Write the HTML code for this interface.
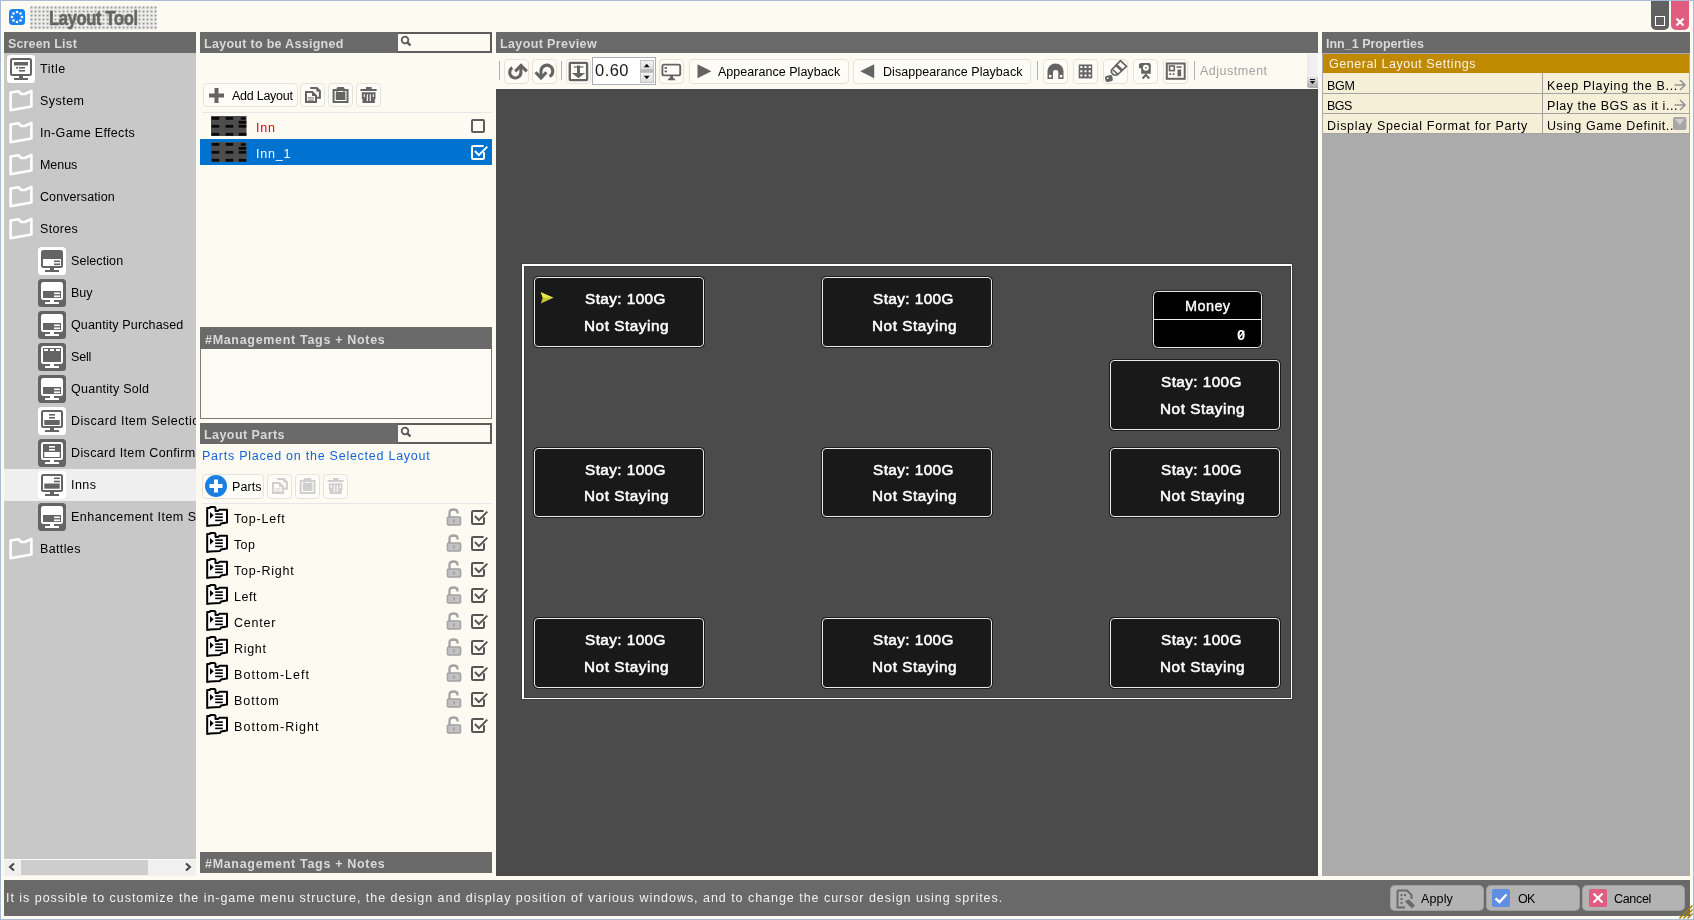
<!DOCTYPE html><html><head><meta charset="utf-8"><style>
html,body{margin:0;padding:0;}
body{width:1694px;height:920px;overflow:hidden;position:relative;background:#fcfaf1;font-family:"Liberation Sans",sans-serif;}
.t{position:absolute;white-space:nowrap;will-change:transform;}
.r{position:absolute;box-sizing:border-box;}
svg{position:absolute;overflow:visible;}
.btn{position:absolute;box-sizing:border-box;border:1px solid #e6e3da;border-radius:4px;background:#fdfcf7;}
</style></head><body>
<div class="r" style="left:0px;top:0px;width:1694px;height:920px;border:1px solid #a5bbd6;"></div>
<svg style="left:9px;top:9px;" width="16" height="16" viewBox="0 0 16 16"><rect x="0" y="0" width="16" height="16" rx="3.5" fill="#1683f0"/><circle cx="13.00" cy="8.00" r="1.3" fill="#fff"/><circle cx="11.54" cy="11.54" r="1.3" fill="#fff"/><circle cx="8.00" cy="13.00" r="1.3" fill="#fff"/><circle cx="4.46" cy="11.54" r="1.3" fill="#fff"/><circle cx="3.00" cy="8.00" r="1.3" fill="#fff"/><circle cx="4.46" cy="4.46" r="1.3" fill="#fff"/><circle cx="8.00" cy="3.00" r="1.3" fill="#fff"/><circle cx="11.54" cy="4.46" r="1.3" fill="#fff"/></svg>
<svg style="left:30px;top:6px;" width="127" height="24" viewBox="0 0 127 24"><defs><pattern id="dots" width="4" height="4" patternUnits="userSpaceOnUse"><rect width="4" height="4" fill="#efefed"/><rect x="0.5" y="0.5" width="2" height="2" fill="#9c9c9c"/></pattern></defs><rect width="127" height="24" fill="url(#dots)"/></svg>
<div class="t" style="left:49px;top:5.6px;font-size:21px;line-height:24px;font-weight:bold;color:#646464;transform:scaleX(0.785);transform-origin:0 0;letter-spacing:-0.4px;-webkit-text-stroke:0.6px #646464;">Layout Tool</div>
<div class="r" style="left:1651px;top:1px;width:18px;height:29px;background:#616161;border-radius:0 0 5px 5px;"></div>
<div class="r" style="left:1655px;top:16px;width:10px;height:10px;border:1.5px solid #fff;"></div>
<div class="r" style="left:1671px;top:1px;width:18px;height:29px;background:#e05d80;border-radius:0 0 5px 5px;"></div>
<svg style="left:1675px;top:17px;" width="10" height="10" viewBox="0 0 10 10"><path d="M1.5 1.5L8.5 8.5M8.5 1.5L1.5 8.5" stroke="#fff" stroke-width="2.2"/></svg>
<div class="r" style="left:4px;top:32px;width:192px;height:21px;background:#6a6a6a;"></div>
<div class="t" style="left:8px;top:38.42px;font-size:12.5px;line-height:12.5px;color:#d9d9d9;font-weight:bold;letter-spacing:0.146px;">Screen List</div>
<div class="r" style="left:200px;top:32px;width:292px;height:21px;background:#6a6a6a;"></div>
<div class="t" style="left:204px;top:38.42px;font-size:12.5px;line-height:12.5px;color:#d9d9d9;font-weight:bold;letter-spacing:0.291px;">Layout to be Assigned</div>
<div class="r" style="left:398px;top:32px;width:94px;height:21px;background:#fcfaf1;border:2px solid #5c5c5c;border-left:none;"></div>
<svg style="left:400px;top:35px;" width="12" height="12" viewBox="0 0 12 12"><circle cx="5" cy="5" r="3.3" stroke="#5a5a5a" stroke-width="1.8" fill="none"/><path d="M7.3 7.3L10.5 10.5" stroke="#5a5a5a" stroke-width="2.4"/></svg>
<div class="r" style="left:496px;top:32px;width:822px;height:21px;background:#6a6a6a;"></div>
<div class="t" style="left:500px;top:38.42px;font-size:12.5px;line-height:12.5px;color:#d9d9d9;font-weight:bold;letter-spacing:0.378px;">Layout Preview</div>
<div class="r" style="left:1322px;top:32px;width:368px;height:21px;background:#6a6a6a;"></div>
<div class="t" style="left:1326px;top:38.42px;font-size:12.5px;line-height:12.5px;color:#d9d9d9;font-weight:bold;letter-spacing:0.003px;">Inn_1 Properties</div>
<div class="r" style="left:4px;top:53px;width:192px;height:806px;background:#c8c8c8;"></div>
<div class="r" style="left:4px;top:469px;width:192px;height:32px;background:#efefef;"></div>
<div style="position:absolute;left:4px;top:53px;width:192px;height:806px;overflow:hidden;">
<svg style="left:3px;top:2px;" width="28" height="28" viewBox="0 0 28 28"><rect x="0" y="0" width="28" height="28" rx="3.5" fill="#ffffff"/><rect x="4" y="4" width="20" height="16" rx="1.5" fill="none" stroke="#646464" stroke-width="2"/><rect x="12" y="20" width="4" height="3" fill="#646464"/><rect x="7" y="23" width="14" height="2" fill="#646464"/><rect x="7" y="7" width="14" height="3.5" fill="#646464"/><rect x="9" y="12" width="2" height="1.6" fill="#646464"/><rect x="12" y="12" width="6" height="1.6" fill="#646464"/><rect x="12" y="15" width="6" height="1.6" fill="#646464"/></svg>
<div class="t" style="left:36.3px;top:10.22px;font-size:12.5px;line-height:12.5px;color:#000;font-weight:normal;letter-spacing:0.529px;">Title</div>
<svg style="left:-4px;top:32px;" width="32" height="32" viewBox="0 0 32 32"><path d="M10.6 25.3 L10.6 7.5 L18.5 6.2 L21 9 L25 9 L31.4 6 L31.4 21.5 Z" fill="none" stroke="#fff" stroke-width="2.6" stroke-linejoin="round"/></svg>
<div class="t" style="left:36.3px;top:42.22px;font-size:12.5px;line-height:12.5px;color:#000;font-weight:normal;letter-spacing:0.455px;">System</div>
<svg style="left:-4px;top:64px;" width="32" height="32" viewBox="0 0 32 32"><path d="M10.6 25.3 L10.6 7.5 L18.5 6.2 L21 9 L25 9 L31.4 6 L31.4 21.5 Z" fill="none" stroke="#fff" stroke-width="2.6" stroke-linejoin="round"/></svg>
<div class="t" style="left:36.3px;top:74.22px;font-size:12.5px;line-height:12.5px;color:#000;font-weight:normal;letter-spacing:0.329px;">In-Game Effects</div>
<svg style="left:-4px;top:96px;" width="32" height="32" viewBox="0 0 32 32"><path d="M10.6 25.3 L10.6 7.5 L18.5 6.2 L21 9 L25 9 L31.4 6 L31.4 21.5 Z" fill="none" stroke="#fff" stroke-width="2.6" stroke-linejoin="round"/></svg>
<div class="t" style="left:36.3px;top:106.22px;font-size:12.5px;line-height:12.5px;color:#000;font-weight:normal;letter-spacing:-0.063px;">Menus</div>
<svg style="left:-4px;top:128px;" width="32" height="32" viewBox="0 0 32 32"><path d="M10.6 25.3 L10.6 7.5 L18.5 6.2 L21 9 L25 9 L31.4 6 L31.4 21.5 Z" fill="none" stroke="#fff" stroke-width="2.6" stroke-linejoin="round"/></svg>
<div class="t" style="left:36.3px;top:138.22px;font-size:12.5px;line-height:12.5px;color:#000;font-weight:normal;letter-spacing:0.095px;">Conversation</div>
<svg style="left:-4px;top:160px;" width="32" height="32" viewBox="0 0 32 32"><path d="M10.6 25.3 L10.6 7.5 L18.5 6.2 L21 9 L25 9 L31.4 6 L31.4 21.5 Z" fill="none" stroke="#fff" stroke-width="2.6" stroke-linejoin="round"/></svg>
<div class="t" style="left:36.3px;top:170.22px;font-size:12.5px;line-height:12.5px;color:#000;font-weight:normal;letter-spacing:0.346px;">Stores</div>
<svg style="left:34px;top:194px;" width="28" height="28" viewBox="0 0 28 28"><rect x="0" y="0" width="28" height="28" rx="3.5" fill="#ffffff"/><rect x="4" y="4" width="20" height="16" rx="1.5" fill="none" stroke="#646464" stroke-width="2"/><rect x="12" y="20" width="4" height="3" fill="#646464"/><rect x="7" y="23" width="14" height="2" fill="#646464"/><rect x="5" y="5" width="18" height="7" fill="#646464"/><rect x="16" y="13.5" width="6" height="1.6" fill="#646464"/><rect x="16" y="16.5" width="6" height="1.6" fill="#646464"/></svg>
<div class="t" style="left:67.3px;top:202.22px;font-size:12.5px;line-height:12.5px;color:#000;font-weight:normal;letter-spacing:0.085px;">Selection</div>
<svg style="left:34px;top:226px;" width="28" height="28" viewBox="0 0 28 28"><rect x="0" y="0" width="28" height="28" rx="3.5" fill="#646464"/><rect x="4" y="4" width="20" height="16" rx="1.5" fill="none" stroke="#ffffff" stroke-width="2"/><rect x="12" y="20" width="4" height="3" fill="#ffffff"/><rect x="7" y="23" width="14" height="2" fill="#ffffff"/><rect x="5" y="5" width="18" height="7" fill="#ffffff"/><rect x="16" y="13.5" width="6" height="1.6" fill="#ffffff"/><rect x="16" y="16.5" width="6" height="1.6" fill="#ffffff"/></svg>
<div class="t" style="left:67.3px;top:234.22px;font-size:12.5px;line-height:12.5px;color:#000;font-weight:normal;letter-spacing:0.018px;">Buy</div>
<svg style="left:34px;top:258px;" width="28" height="28" viewBox="0 0 28 28"><rect x="0" y="0" width="28" height="28" rx="3.5" fill="#646464"/><rect x="4" y="4" width="20" height="16" rx="1.5" fill="none" stroke="#ffffff" stroke-width="2"/><rect x="12" y="20" width="4" height="3" fill="#ffffff"/><rect x="7" y="23" width="14" height="2" fill="#ffffff"/><rect x="5" y="5" width="18" height="7" fill="#ffffff"/><rect x="16" y="13.5" width="6" height="1.6" fill="#ffffff"/><rect x="16" y="16.5" width="6" height="1.6" fill="#ffffff"/></svg>
<div class="t" style="left:67.3px;top:266.22px;font-size:12.5px;line-height:12.5px;color:#000;font-weight:normal;letter-spacing:0.145px;">Quantity Purchased</div>
<svg style="left:34px;top:290px;" width="28" height="28" viewBox="0 0 28 28"><rect x="0" y="0" width="28" height="28" rx="3.5" fill="#646464"/><rect x="4" y="4" width="20" height="16" rx="1.5" fill="none" stroke="#ffffff" stroke-width="2"/><rect x="12" y="20" width="4" height="3" fill="#ffffff"/><rect x="7" y="23" width="14" height="2" fill="#ffffff"/><rect x="6" y="6" width="4" height="2" fill="#ffffff"/><rect x="12" y="6" width="4" height="2" fill="#ffffff"/><rect x="18" y="6" width="4" height="2" fill="#ffffff"/></svg>
<div class="t" style="left:67.3px;top:298.22px;font-size:12.5px;line-height:12.5px;color:#000;font-weight:normal;letter-spacing:-0.165px;">Sell</div>
<svg style="left:34px;top:322px;" width="28" height="28" viewBox="0 0 28 28"><rect x="0" y="0" width="28" height="28" rx="3.5" fill="#646464"/><rect x="4" y="4" width="20" height="16" rx="1.5" fill="none" stroke="#ffffff" stroke-width="2"/><rect x="12" y="20" width="4" height="3" fill="#ffffff"/><rect x="7" y="23" width="14" height="2" fill="#ffffff"/><rect x="5" y="5" width="18" height="7" fill="#ffffff"/><rect x="16" y="13.5" width="6" height="1.6" fill="#ffffff"/><rect x="16" y="16.5" width="6" height="1.6" fill="#ffffff"/></svg>
<div class="t" style="left:67.3px;top:330.22px;font-size:12.5px;line-height:12.5px;color:#000;font-weight:normal;letter-spacing:0.250px;">Quantity Sold</div>
<svg style="left:34px;top:354px;" width="28" height="28" viewBox="0 0 28 28"><rect x="0" y="0" width="28" height="28" rx="3.5" fill="#ffffff"/><rect x="4" y="4" width="20" height="16" rx="1.5" fill="none" stroke="#646464" stroke-width="2"/><rect x="12" y="20" width="4" height="3" fill="#646464"/><rect x="7" y="23" width="14" height="2" fill="#646464"/><rect x="11" y="7" width="6" height="1.6" fill="#646464"/><rect x="11" y="10" width="6" height="1.6" fill="#646464"/><rect x="6.3" y="13" width="15.4" height="5" fill="#646464"/></svg>
<div class="t" style="left:67.3px;top:362.22px;font-size:12.5px;line-height:12.5px;color:#000;font-weight:normal;letter-spacing:0.508px;">Discard Item Selection</div>
<svg style="left:34px;top:386px;" width="28" height="28" viewBox="0 0 28 28"><rect x="0" y="0" width="28" height="28" rx="3.5" fill="#646464"/><rect x="4" y="4" width="20" height="16" rx="1.5" fill="none" stroke="#ffffff" stroke-width="2"/><rect x="12" y="20" width="4" height="3" fill="#ffffff"/><rect x="7" y="23" width="14" height="2" fill="#ffffff"/><rect x="11" y="7" width="6" height="1.6" fill="#ffffff"/><rect x="11" y="10" width="6" height="1.6" fill="#ffffff"/><rect x="6.3" y="13" width="15.4" height="5" fill="#ffffff"/></svg>
<div class="t" style="left:67.3px;top:394.22px;font-size:12.5px;line-height:12.5px;color:#000;font-weight:normal;letter-spacing:0.357px;">Discard Item Confirm</div>
<svg style="left:34px;top:418px;" width="28" height="28" viewBox="0 0 28 28"><rect x="0" y="0" width="28" height="28" rx="3.5" fill="#ffffff"/><rect x="4" y="4" width="20" height="16" rx="1.5" fill="none" stroke="#646464" stroke-width="2"/><rect x="12" y="20" width="4" height="3" fill="#646464"/><rect x="7" y="23" width="14" height="2" fill="#646464"/><rect x="16" y="6.5" width="6" height="1.6" fill="#646464"/><rect x="16" y="9.7" width="6" height="1.6" fill="#646464"/><rect x="6.3" y="12.5" width="15.4" height="5.2" fill="#646464"/></svg>
<div class="t" style="left:67.3px;top:426.22px;font-size:12.5px;line-height:12.5px;color:#000;font-weight:normal;letter-spacing:0.444px;">Inns</div>
<svg style="left:34px;top:450px;" width="28" height="28" viewBox="0 0 28 28"><rect x="0" y="0" width="28" height="28" rx="3.5" fill="#646464"/><rect x="4" y="4" width="20" height="16" rx="1.5" fill="none" stroke="#ffffff" stroke-width="2"/><rect x="12" y="20" width="4" height="3" fill="#ffffff"/><rect x="7" y="23" width="14" height="2" fill="#ffffff"/><rect x="5" y="5" width="18" height="7" fill="#ffffff"/><rect x="16" y="13.5" width="6" height="1.6" fill="#ffffff"/><rect x="16" y="16.5" width="6" height="1.6" fill="#ffffff"/></svg>
<div class="t" style="left:67.3px;top:458.22px;font-size:12.5px;line-height:12.5px;color:#000;font-weight:normal;letter-spacing:0.488px;">Enhancement Item Shop</div>
<svg style="left:-4px;top:480px;" width="32" height="32" viewBox="0 0 32 32"><path d="M10.6 25.3 L10.6 7.5 L18.5 6.2 L21 9 L25 9 L31.4 6 L31.4 21.5 Z" fill="none" stroke="#fff" stroke-width="2.6" stroke-linejoin="round"/></svg>
<div class="t" style="left:36.3px;top:490.22px;font-size:12.5px;line-height:12.5px;color:#000;font-weight:normal;letter-spacing:0.369px;">Battles</div>
</div>
<div class="r" style="left:4px;top:860px;width:192px;height:16px;background:#f0f0f0;"></div>
<div class="r" style="left:21px;top:860px;width:127px;height:15px;background:#cdcdcd;"></div>
<svg style="left:8px;top:863px;" width="8" height="8" viewBox="0 0 8 8"><path d="M6 0.5 L2 4 L6 7.5" fill="none" stroke="#444" stroke-width="2"/></svg>
<svg style="left:184px;top:863px;" width="8" height="8" viewBox="0 0 8 8"><path d="M2 0.5 L6 4 L2 7.5" fill="none" stroke="#444" stroke-width="2"/></svg>
<div class="btn" style="left:203px;top:83px;width:95px;height:24px;"></div>
<svg style="left:209px;top:88px;" width="15" height="15" viewBox="0 0 15 15"><rect x="5.5" y="0" width="4" height="15" fill="#646464"/><rect x="0" y="5.5" width="15" height="4" fill="#646464"/></svg>
<div class="t" style="left:232px;top:90.42px;font-size:12.5px;line-height:12.5px;color:#000;font-weight:normal;letter-spacing:-0.255px;">Add Layout</div>
<div class="btn" style="left:300.3px;top:82.6px;width:25px;height:24.7px;"></div>
<svg style="left:300.3px;top:82.6px;" width="25" height="25" viewBox="0 0 25 25"><path d="M10.2 5 L16.8 5 L19.9 8.1 L19.9 14.7 L17 14.7" fill="none" stroke="#646464" stroke-width="2"/><path d="M16.3 4 L20.9 8.6 L16.3 8.6 Z" fill="#646464"/><path d="M6 9 L12.3 9 L16 12.7 L16 19 L6 19 Z" fill="#fdfcf7" stroke="#646464" stroke-width="2"/><path d="M12 8 L17 13 L12 13 Z" fill="#646464"/><rect x="7.8" y="14.4" width="6" height="1" fill="#646464"/><rect x="7.8" y="16.6" width="6" height="1" fill="#646464"/></svg>
<div class="btn" style="left:328.4px;top:82.6px;width:25px;height:24.7px;"></div>
<svg style="left:328.4px;top:82.6px;" width="25" height="25" viewBox="0 0 25 25"><rect x="5.6" y="7" width="13.9" height="12" fill="none" stroke="#646464" stroke-width="2"/><rect x="7.8" y="9" width="9.6" height="8" fill="#646464"/><path d="M8.6 9 L8.6 5.5 L9.6 4 L15.6 4 L16.6 5.5 L16.6 9 L15.4 9 L15.4 6 L9.9 6 L9.9 9 Z" fill="#646464"/></svg>
<div class="btn" style="left:356.4px;top:82.6px;width:25px;height:24.7px;"></div>
<svg style="left:356.4px;top:82.6px;" width="25" height="25" viewBox="0 0 25 25"><rect x="4.5" y="6" width="16.1" height="2" fill="#646464"/><rect x="10" y="4" width="5.6" height="2.2" fill="#646464"/><path d="M5.8 9.2 L19.5 9.2 L19.5 16 L18.8 16 L18.8 20 L6.5 20 L6.5 16 L5.8 16 Z" fill="#646464"/><rect x="7.7" y="11.3" width="1.1" height="2.7" fill="#fdfcf7"/><rect x="10.8" y="11.3" width="1.1" height="6.8" fill="#fdfcf7"/><rect x="13.7" y="11.3" width="1.1" height="6.8" fill="#fdfcf7"/><rect x="16.8" y="11.3" width="1.1" height="2.7" fill="#fdfcf7"/></svg>
<div class="r" style="left:202px;top:112px;width:289px;height:1px;background:#e4e6e8;"></div>
<svg style="left:211.4px;top:116px;" width="36" height="20" viewBox="0 0 36 20"><rect width="35.5" height="20" fill="#4d4d4d"/><rect x="0.7" y="1" width="7.6" height="2.8" fill="#0a0a0a"/><rect x="0.7" y="8.9" width="7.6" height="2.8" fill="#0a0a0a"/><rect x="0.7" y="16.9" width="7.6" height="2.8" fill="#0a0a0a"/><rect x="14.6" y="1" width="7.6" height="2.8" fill="#0a0a0a"/><rect x="14.6" y="8.9" width="7.6" height="2.8" fill="#0a0a0a"/><rect x="14.6" y="16.9" width="7.6" height="2.8" fill="#0a0a0a"/><rect x="29.7" y="1.3" width="5.2" height="2.4" rx="1" fill="#0a0a0a"/><rect x="27.7" y="8.9" width="7.6" height="2.8" fill="#0a0a0a"/><rect x="27.7" y="16.9" width="7.6" height="2.8" fill="#0a0a0a"/><rect x="27.7" y="4.9" width="7.6" height="2.8" fill="#0a0a0a"/></svg>
<div class="t" style="left:255.7px;top:122.42px;font-size:12.5px;line-height:12.5px;color:#f00000;font-weight:normal;letter-spacing:0.742px;">Inn</div>
<div class="r" style="left:471px;top:119px;width:14px;height:14px;border:2px solid #5e5e5e;border-radius:2px;"></div>
<div class="r" style="left:200px;top:139px;width:292px;height:26px;background:#0073d1;"></div>
<svg style="left:211.4px;top:142px;" width="36" height="20" viewBox="0 0 36 20"><rect width="35.5" height="20" fill="#4d4d4d"/><rect x="0.7" y="1" width="7.6" height="2.8" fill="#0a0a0a"/><rect x="0.7" y="8.9" width="7.6" height="2.8" fill="#0a0a0a"/><rect x="0.7" y="16.9" width="7.6" height="2.8" fill="#0a0a0a"/><rect x="14.6" y="1" width="7.6" height="2.8" fill="#0a0a0a"/><rect x="14.6" y="8.9" width="7.6" height="2.8" fill="#0a0a0a"/><rect x="14.6" y="16.9" width="7.6" height="2.8" fill="#0a0a0a"/><rect x="29.7" y="1.3" width="5.2" height="2.4" rx="1" fill="#0a0a0a"/><rect x="27.7" y="8.9" width="7.6" height="2.8" fill="#0a0a0a"/><rect x="27.7" y="16.9" width="7.6" height="2.8" fill="#0a0a0a"/><rect x="27.7" y="4.9" width="7.6" height="2.8" fill="#0a0a0a"/></svg>
<div class="t" style="left:255.7px;top:148.42px;font-size:12.5px;line-height:12.5px;color:#ffffff;font-weight:normal;letter-spacing:0.804px;">Inn_1</div>
<svg style="left:471px;top:143px;" width="20" height="18" viewBox="0 0 20 18"><path d="M12.6 3 L2.2 3 Q1 3 1 4.2 L1 14.8 Q1 16 2.2 16 L11.8 16 Q13 16 13 14.8 L13 9.3" fill="none" stroke="#ffffff" stroke-width="2"/><path d="M3.9 8 L7.9 12.1 L16.3 3.6" fill="none" stroke="#ffffff" stroke-width="2"/></svg>
<div class="r" style="left:200px;top:327px;width:292px;height:22px;background:#6a6a6a;"></div>
<div class="t" style="left:205.2px;top:333.72px;font-size:12.5px;line-height:12.5px;color:#d9d9d9;font-weight:bold;letter-spacing:0.685px;">#Management Tags + Notes</div>
<div class="r" style="left:200px;top:349px;width:292px;height:70px;border:1px solid #7a7a7a;border-top:none;background:#fdfbf4;"></div>
<div class="r" style="left:200px;top:423px;width:292px;height:21px;background:#6a6a6a;"></div>
<div class="t" style="left:204px;top:429.42px;font-size:12.5px;line-height:12.5px;color:#d9d9d9;font-weight:bold;letter-spacing:0.440px;">Layout Parts</div>
<div class="r" style="left:398px;top:423px;width:94px;height:21px;background:#fcfaf1;border:2px solid #5c5c5c;border-left:none;"></div>
<svg style="left:400px;top:426px;" width="12" height="12" viewBox="0 0 12 12"><circle cx="5" cy="5" r="3.3" stroke="#5a5a5a" stroke-width="1.8" fill="none"/><path d="M7.3 7.3L10.5 10.5" stroke="#5a5a5a" stroke-width="2.4"/></svg>
<div class="t" style="left:202px;top:450.12px;font-size:12.5px;line-height:12.5px;color:#1464d8;font-weight:normal;letter-spacing:0.751px;">Parts Placed on the Selected Layout</div>
<div class="btn" style="left:202px;top:474px;width:62px;height:25px;"></div>
<svg style="left:205px;top:475px;" width="22" height="22" viewBox="0 0 22 22"><circle cx="11" cy="11" r="11" fill="#1a7fe4"/><rect x="9" y="4.5" width="4" height="13" fill="#fff"/><rect x="4.5" y="9" width="13" height="4" fill="#fff"/></svg>
<div class="t" style="left:231.6px;top:481.42px;font-size:12.5px;line-height:12.5px;color:#000;font-weight:normal;letter-spacing:0.086px;">Parts</div>
<div class="btn" style="left:267px;top:474px;width:25px;height:25px;"></div>
<svg style="left:267px;top:474px;" width="25" height="25" viewBox="0 0 25 25"><path d="M10.2 5 L16.8 5 L19.9 8.1 L19.9 14.7 L17 14.7" fill="none" stroke="#cfcfcf" stroke-width="2"/><path d="M16.3 4 L20.9 8.6 L16.3 8.6 Z" fill="#cfcfcf"/><path d="M6 9 L12.3 9 L16 12.7 L16 19 L6 19 Z" fill="#fdfcf7" stroke="#cfcfcf" stroke-width="2"/><path d="M12 8 L17 13 L12 13 Z" fill="#cfcfcf"/><rect x="7.8" y="14.4" width="6" height="1" fill="#cfcfcf"/><rect x="7.8" y="16.6" width="6" height="1" fill="#cfcfcf"/></svg>
<div class="btn" style="left:295px;top:474px;width:25px;height:25px;"></div>
<svg style="left:295px;top:474px;" width="25" height="25" viewBox="0 0 25 25"><rect x="5.6" y="7" width="13.9" height="12" fill="none" stroke="#cfcfcf" stroke-width="2"/><rect x="7.8" y="9" width="9.6" height="8" fill="#cfcfcf"/><path d="M8.6 9 L8.6 5.5 L9.6 4 L15.6 4 L16.6 5.5 L16.6 9 L15.4 9 L15.4 6 L9.9 6 L9.9 9 Z" fill="#cfcfcf"/></svg>
<div class="btn" style="left:323px;top:474px;width:25px;height:25px;"></div>
<svg style="left:323px;top:474px;" width="25" height="25" viewBox="0 0 25 25"><rect x="4.5" y="6" width="16.1" height="2" fill="#cfcfcf"/><rect x="10" y="4" width="5.6" height="2.2" fill="#cfcfcf"/><path d="M5.8 9.2 L19.5 9.2 L19.5 16 L18.8 16 L18.8 20 L6.5 20 L6.5 16 L5.8 16 Z" fill="#cfcfcf"/><rect x="7.7" y="11.3" width="1.1" height="2.7" fill="#fdfcf7"/><rect x="10.8" y="11.3" width="1.1" height="6.8" fill="#fdfcf7"/><rect x="13.7" y="11.3" width="1.1" height="6.8" fill="#fdfcf7"/><rect x="16.8" y="11.3" width="1.1" height="2.7" fill="#fdfcf7"/></svg>
<div class="r" style="left:202px;top:503px;width:289px;height:1px;background:#e4e6e8;"></div>
<svg style="left:204px;top:505px;" width="26" height="24" viewBox="0 0 26 24"><path d="M3.2 21 L3.2 3 L5.8 3 L6.2 2 L10.8 2 L11.5 3 L11.5 6 L14 6 L15.5 4.8 L23 4.8 L23 17.5 L17 18.5 L16 20 L6 20.5 Z" fill="#fff" stroke="#000" stroke-width="2" stroke-linejoin="round"/><path d="M6 7 L9.7 10.3 L6 13.7 Z" fill="#000"/><rect x="11.2" y="8.3" width="7.6" height="1.6" fill="#000"/><rect x="11.2" y="11.4" width="7.6" height="1.6" fill="#000"/><rect x="11.2" y="14.6" width="7.6" height="1.6" fill="#000"/></svg>
<div class="t" style="left:233.5px;top:513.42px;font-size:12.5px;line-height:12.5px;color:#000;font-weight:normal;letter-spacing:0.805px;">Top-Left</div>
<svg style="left:447px;top:508px;" width="14" height="18" viewBox="0 0 14 18"><path d="M2.5 9 L2.5 4.5 Q2.5 1.5 6.5 1.5 Q10.5 1.5 10.5 4.5 L10.5 5.5" fill="none" stroke="#a3a3a3" stroke-width="2.3"/><rect x="0.5" y="9" width="13" height="8" rx="1" fill="#c2c2c2" stroke="#a3a3a3" stroke-width="1.6"/><rect x="6" y="11.5" width="2" height="3" fill="#a3a3a3"/></svg>
<svg style="left:471px;top:508px;" width="20" height="18" viewBox="0 0 20 18"><path d="M12.6 3 L2.2 3 Q1 3 1 4.2 L1 14.8 Q1 16 2.2 16 L11.8 16 Q13 16 13 14.8 L13 9.3" fill="none" stroke="#555" stroke-width="2"/><path d="M3.9 8 L7.9 12.1 L16.3 3.6" fill="none" stroke="#555" stroke-width="2"/></svg>
<svg style="left:204px;top:531px;" width="26" height="24" viewBox="0 0 26 24"><path d="M3.2 21 L3.2 3 L5.8 3 L6.2 2 L10.8 2 L11.5 3 L11.5 6 L14 6 L15.5 4.8 L23 4.8 L23 17.5 L17 18.5 L16 20 L6 20.5 Z" fill="#fff" stroke="#000" stroke-width="2" stroke-linejoin="round"/><path d="M6 7 L9.7 10.3 L6 13.7 Z" fill="#000"/><rect x="11.2" y="8.3" width="7.6" height="1.6" fill="#000"/><rect x="11.2" y="11.4" width="7.6" height="1.6" fill="#000"/><rect x="11.2" y="14.6" width="7.6" height="1.6" fill="#000"/></svg>
<div class="t" style="left:233.5px;top:539.42px;font-size:12.5px;line-height:12.5px;color:#000;font-weight:normal;letter-spacing:0.348px;">Top</div>
<svg style="left:447px;top:534px;" width="14" height="18" viewBox="0 0 14 18"><path d="M2.5 9 L2.5 4.5 Q2.5 1.5 6.5 1.5 Q10.5 1.5 10.5 4.5 L10.5 5.5" fill="none" stroke="#a3a3a3" stroke-width="2.3"/><rect x="0.5" y="9" width="13" height="8" rx="1" fill="#c2c2c2" stroke="#a3a3a3" stroke-width="1.6"/><rect x="6" y="11.5" width="2" height="3" fill="#a3a3a3"/></svg>
<svg style="left:471px;top:534px;" width="20" height="18" viewBox="0 0 20 18"><path d="M12.6 3 L2.2 3 Q1 3 1 4.2 L1 14.8 Q1 16 2.2 16 L11.8 16 Q13 16 13 14.8 L13 9.3" fill="none" stroke="#555" stroke-width="2"/><path d="M3.9 8 L7.9 12.1 L16.3 3.6" fill="none" stroke="#555" stroke-width="2"/></svg>
<svg style="left:204px;top:557px;" width="26" height="24" viewBox="0 0 26 24"><path d="M3.2 21 L3.2 3 L5.8 3 L6.2 2 L10.8 2 L11.5 3 L11.5 6 L14 6 L15.5 4.8 L23 4.8 L23 17.5 L17 18.5 L16 20 L6 20.5 Z" fill="#fff" stroke="#000" stroke-width="2" stroke-linejoin="round"/><path d="M6 7 L9.7 10.3 L6 13.7 Z" fill="#000"/><rect x="11.2" y="8.3" width="7.6" height="1.6" fill="#000"/><rect x="11.2" y="11.4" width="7.6" height="1.6" fill="#000"/><rect x="11.2" y="14.6" width="7.6" height="1.6" fill="#000"/></svg>
<div class="t" style="left:233.5px;top:565.42px;font-size:12.5px;line-height:12.5px;color:#000;font-weight:normal;letter-spacing:0.789px;">Top-Right</div>
<svg style="left:447px;top:560px;" width="14" height="18" viewBox="0 0 14 18"><path d="M2.5 9 L2.5 4.5 Q2.5 1.5 6.5 1.5 Q10.5 1.5 10.5 4.5 L10.5 5.5" fill="none" stroke="#a3a3a3" stroke-width="2.3"/><rect x="0.5" y="9" width="13" height="8" rx="1" fill="#c2c2c2" stroke="#a3a3a3" stroke-width="1.6"/><rect x="6" y="11.5" width="2" height="3" fill="#a3a3a3"/></svg>
<svg style="left:471px;top:560px;" width="20" height="18" viewBox="0 0 20 18"><path d="M12.6 3 L2.2 3 Q1 3 1 4.2 L1 14.8 Q1 16 2.2 16 L11.8 16 Q13 16 13 14.8 L13 9.3" fill="none" stroke="#555" stroke-width="2"/><path d="M3.9 8 L7.9 12.1 L16.3 3.6" fill="none" stroke="#555" stroke-width="2"/></svg>
<svg style="left:204px;top:583px;" width="26" height="24" viewBox="0 0 26 24"><path d="M3.2 21 L3.2 3 L5.8 3 L6.2 2 L10.8 2 L11.5 3 L11.5 6 L14 6 L15.5 4.8 L23 4.8 L23 17.5 L17 18.5 L16 20 L6 20.5 Z" fill="#fff" stroke="#000" stroke-width="2" stroke-linejoin="round"/><path d="M6 7 L9.7 10.3 L6 13.7 Z" fill="#000"/><rect x="11.2" y="8.3" width="7.6" height="1.6" fill="#000"/><rect x="11.2" y="11.4" width="7.6" height="1.6" fill="#000"/><rect x="11.2" y="14.6" width="7.6" height="1.6" fill="#000"/></svg>
<div class="t" style="left:233.5px;top:591.42px;font-size:12.5px;line-height:12.5px;color:#000;font-weight:normal;letter-spacing:0.564px;">Left</div>
<svg style="left:447px;top:586px;" width="14" height="18" viewBox="0 0 14 18"><path d="M2.5 9 L2.5 4.5 Q2.5 1.5 6.5 1.5 Q10.5 1.5 10.5 4.5 L10.5 5.5" fill="none" stroke="#a3a3a3" stroke-width="2.3"/><rect x="0.5" y="9" width="13" height="8" rx="1" fill="#c2c2c2" stroke="#a3a3a3" stroke-width="1.6"/><rect x="6" y="11.5" width="2" height="3" fill="#a3a3a3"/></svg>
<svg style="left:471px;top:586px;" width="20" height="18" viewBox="0 0 20 18"><path d="M12.6 3 L2.2 3 Q1 3 1 4.2 L1 14.8 Q1 16 2.2 16 L11.8 16 Q13 16 13 14.8 L13 9.3" fill="none" stroke="#555" stroke-width="2"/><path d="M3.9 8 L7.9 12.1 L16.3 3.6" fill="none" stroke="#555" stroke-width="2"/></svg>
<svg style="left:204px;top:609px;" width="26" height="24" viewBox="0 0 26 24"><path d="M3.2 21 L3.2 3 L5.8 3 L6.2 2 L10.8 2 L11.5 3 L11.5 6 L14 6 L15.5 4.8 L23 4.8 L23 17.5 L17 18.5 L16 20 L6 20.5 Z" fill="#fff" stroke="#000" stroke-width="2" stroke-linejoin="round"/><path d="M6 7 L9.7 10.3 L6 13.7 Z" fill="#000"/><rect x="11.2" y="8.3" width="7.6" height="1.6" fill="#000"/><rect x="11.2" y="11.4" width="7.6" height="1.6" fill="#000"/><rect x="11.2" y="14.6" width="7.6" height="1.6" fill="#000"/></svg>
<div class="t" style="left:233.5px;top:617.42px;font-size:12.5px;line-height:12.5px;color:#000;font-weight:normal;letter-spacing:0.764px;">Center</div>
<svg style="left:447px;top:612px;" width="14" height="18" viewBox="0 0 14 18"><path d="M2.5 9 L2.5 4.5 Q2.5 1.5 6.5 1.5 Q10.5 1.5 10.5 4.5 L10.5 5.5" fill="none" stroke="#a3a3a3" stroke-width="2.3"/><rect x="0.5" y="9" width="13" height="8" rx="1" fill="#c2c2c2" stroke="#a3a3a3" stroke-width="1.6"/><rect x="6" y="11.5" width="2" height="3" fill="#a3a3a3"/></svg>
<svg style="left:471px;top:612px;" width="20" height="18" viewBox="0 0 20 18"><path d="M12.6 3 L2.2 3 Q1 3 1 4.2 L1 14.8 Q1 16 2.2 16 L11.8 16 Q13 16 13 14.8 L13 9.3" fill="none" stroke="#555" stroke-width="2"/><path d="M3.9 8 L7.9 12.1 L16.3 3.6" fill="none" stroke="#555" stroke-width="2"/></svg>
<svg style="left:204px;top:635px;" width="26" height="24" viewBox="0 0 26 24"><path d="M3.2 21 L3.2 3 L5.8 3 L6.2 2 L10.8 2 L11.5 3 L11.5 6 L14 6 L15.5 4.8 L23 4.8 L23 17.5 L17 18.5 L16 20 L6 20.5 Z" fill="#fff" stroke="#000" stroke-width="2" stroke-linejoin="round"/><path d="M6 7 L9.7 10.3 L6 13.7 Z" fill="#000"/><rect x="11.2" y="8.3" width="7.6" height="1.6" fill="#000"/><rect x="11.2" y="11.4" width="7.6" height="1.6" fill="#000"/><rect x="11.2" y="14.6" width="7.6" height="1.6" fill="#000"/></svg>
<div class="t" style="left:233.5px;top:643.42px;font-size:12.5px;line-height:12.5px;color:#000;font-weight:normal;letter-spacing:0.683px;">Right</div>
<svg style="left:447px;top:638px;" width="14" height="18" viewBox="0 0 14 18"><path d="M2.5 9 L2.5 4.5 Q2.5 1.5 6.5 1.5 Q10.5 1.5 10.5 4.5 L10.5 5.5" fill="none" stroke="#a3a3a3" stroke-width="2.3"/><rect x="0.5" y="9" width="13" height="8" rx="1" fill="#c2c2c2" stroke="#a3a3a3" stroke-width="1.6"/><rect x="6" y="11.5" width="2" height="3" fill="#a3a3a3"/></svg>
<svg style="left:471px;top:638px;" width="20" height="18" viewBox="0 0 20 18"><path d="M12.6 3 L2.2 3 Q1 3 1 4.2 L1 14.8 Q1 16 2.2 16 L11.8 16 Q13 16 13 14.8 L13 9.3" fill="none" stroke="#555" stroke-width="2"/><path d="M3.9 8 L7.9 12.1 L16.3 3.6" fill="none" stroke="#555" stroke-width="2"/></svg>
<svg style="left:204px;top:661px;" width="26" height="24" viewBox="0 0 26 24"><path d="M3.2 21 L3.2 3 L5.8 3 L6.2 2 L10.8 2 L11.5 3 L11.5 6 L14 6 L15.5 4.8 L23 4.8 L23 17.5 L17 18.5 L16 20 L6 20.5 Z" fill="#fff" stroke="#000" stroke-width="2" stroke-linejoin="round"/><path d="M6 7 L9.7 10.3 L6 13.7 Z" fill="#000"/><rect x="11.2" y="8.3" width="7.6" height="1.6" fill="#000"/><rect x="11.2" y="11.4" width="7.6" height="1.6" fill="#000"/><rect x="11.2" y="14.6" width="7.6" height="1.6" fill="#000"/></svg>
<div class="t" style="left:233.5px;top:669.42px;font-size:12.5px;line-height:12.5px;color:#000;font-weight:normal;letter-spacing:1.046px;">Bottom-Left</div>
<svg style="left:447px;top:664px;" width="14" height="18" viewBox="0 0 14 18"><path d="M2.5 9 L2.5 4.5 Q2.5 1.5 6.5 1.5 Q10.5 1.5 10.5 4.5 L10.5 5.5" fill="none" stroke="#a3a3a3" stroke-width="2.3"/><rect x="0.5" y="9" width="13" height="8" rx="1" fill="#c2c2c2" stroke="#a3a3a3" stroke-width="1.6"/><rect x="6" y="11.5" width="2" height="3" fill="#a3a3a3"/></svg>
<svg style="left:471px;top:664px;" width="20" height="18" viewBox="0 0 20 18"><path d="M12.6 3 L2.2 3 Q1 3 1 4.2 L1 14.8 Q1 16 2.2 16 L11.8 16 Q13 16 13 14.8 L13 9.3" fill="none" stroke="#555" stroke-width="2"/><path d="M3.9 8 L7.9 12.1 L16.3 3.6" fill="none" stroke="#555" stroke-width="2"/></svg>
<svg style="left:204px;top:687px;" width="26" height="24" viewBox="0 0 26 24"><path d="M3.2 21 L3.2 3 L5.8 3 L6.2 2 L10.8 2 L11.5 3 L11.5 6 L14 6 L15.5 4.8 L23 4.8 L23 17.5 L17 18.5 L16 20 L6 20.5 Z" fill="#fff" stroke="#000" stroke-width="2" stroke-linejoin="round"/><path d="M6 7 L9.7 10.3 L6 13.7 Z" fill="#000"/><rect x="11.2" y="8.3" width="7.6" height="1.6" fill="#000"/><rect x="11.2" y="11.4" width="7.6" height="1.6" fill="#000"/><rect x="11.2" y="14.6" width="7.6" height="1.6" fill="#000"/></svg>
<div class="t" style="left:233.5px;top:695.42px;font-size:12.5px;line-height:12.5px;color:#000;font-weight:normal;letter-spacing:1.018px;">Bottom</div>
<svg style="left:447px;top:690px;" width="14" height="18" viewBox="0 0 14 18"><path d="M2.5 9 L2.5 4.5 Q2.5 1.5 6.5 1.5 Q10.5 1.5 10.5 4.5 L10.5 5.5" fill="none" stroke="#a3a3a3" stroke-width="2.3"/><rect x="0.5" y="9" width="13" height="8" rx="1" fill="#c2c2c2" stroke="#a3a3a3" stroke-width="1.6"/><rect x="6" y="11.5" width="2" height="3" fill="#a3a3a3"/></svg>
<svg style="left:471px;top:690px;" width="20" height="18" viewBox="0 0 20 18"><path d="M12.6 3 L2.2 3 Q1 3 1 4.2 L1 14.8 Q1 16 2.2 16 L11.8 16 Q13 16 13 14.8 L13 9.3" fill="none" stroke="#555" stroke-width="2"/><path d="M3.9 8 L7.9 12.1 L16.3 3.6" fill="none" stroke="#555" stroke-width="2"/></svg>
<svg style="left:204px;top:713px;" width="26" height="24" viewBox="0 0 26 24"><path d="M3.2 21 L3.2 3 L5.8 3 L6.2 2 L10.8 2 L11.5 3 L11.5 6 L14 6 L15.5 4.8 L23 4.8 L23 17.5 L17 18.5 L16 20 L6 20.5 Z" fill="#fff" stroke="#000" stroke-width="2" stroke-linejoin="round"/><path d="M6 7 L9.7 10.3 L6 13.7 Z" fill="#000"/><rect x="11.2" y="8.3" width="7.6" height="1.6" fill="#000"/><rect x="11.2" y="11.4" width="7.6" height="1.6" fill="#000"/><rect x="11.2" y="14.6" width="7.6" height="1.6" fill="#000"/></svg>
<div class="t" style="left:233.5px;top:721.42px;font-size:12.5px;line-height:12.5px;color:#000;font-weight:normal;letter-spacing:1.055px;">Bottom-Right</div>
<svg style="left:447px;top:716px;" width="14" height="18" viewBox="0 0 14 18"><path d="M2.5 9 L2.5 4.5 Q2.5 1.5 6.5 1.5 Q10.5 1.5 10.5 4.5 L10.5 5.5" fill="none" stroke="#a3a3a3" stroke-width="2.3"/><rect x="0.5" y="9" width="13" height="8" rx="1" fill="#c2c2c2" stroke="#a3a3a3" stroke-width="1.6"/><rect x="6" y="11.5" width="2" height="3" fill="#a3a3a3"/></svg>
<svg style="left:471px;top:716px;" width="20" height="18" viewBox="0 0 20 18"><path d="M12.6 3 L2.2 3 Q1 3 1 4.2 L1 14.8 Q1 16 2.2 16 L11.8 16 Q13 16 13 14.8 L13 9.3" fill="none" stroke="#555" stroke-width="2"/><path d="M3.9 8 L7.9 12.1 L16.3 3.6" fill="none" stroke="#555" stroke-width="2"/></svg>
<div class="r" style="left:200px;top:852px;width:292px;height:21px;background:#6a6a6a;"></div>
<div class="t" style="left:205.2px;top:858.42px;font-size:12.5px;line-height:12.5px;color:#d9d9d9;font-weight:bold;letter-spacing:0.685px;">#Management Tags + Notes</div>
<div class="r" style="left:496px;top:89px;width:822px;height:787px;background:#4b4b4b;"></div>
<div class="r" style="left:499px;top:61px;width:1px;height:19px;background:#aeb2ba;"></div>
<div class="btn" style="left:503.5px;top:58.5px;width:25px;height:25px;"></div>
<svg style="left:503.5px;top:58.5px;" width="25" height="25" viewBox="0 0 25 25"><path d="M8.3 8.6 A5.6 5.6 0 1 0 16.9 13.6 L16.9 7.5" fill="none" stroke="#646464" stroke-width="3.1"/><path d="M11.2 12.3 L17 6.4 L22.8 12.3" fill="none" stroke="#646464" stroke-width="3.1"/></svg>
<div class="btn" style="left:531.5px;top:58.5px;width:25px;height:25px;"></div>
<svg style="left:531.5px;top:58.5px;" width="25" height="25" viewBox="0 0 25 25"><path d="M9 18 L9 11.5 A5.9 5.9 0 1 1 17.5 17.4" fill="none" stroke="#646464" stroke-width="3.1"/><path d="M3.6 13.3 L9 19 L14.4 13.3" fill="none" stroke="#646464" stroke-width="3.1"/></svg>
<div class="r" style="left:561px;top:61px;width:1px;height:19px;background:#aeb2ba;"></div>
<div class="btn" style="left:565.5px;top:58.5px;width:25px;height:25px;"></div>
<svg style="left:565.5px;top:58.5px;" width="25" height="25" viewBox="0 0 25 25"><rect x="3.8" y="3.9" width="17.3" height="17.2" rx="0.8" fill="none" stroke="#646464" stroke-width="2.4"/><rect x="7.8" y="7.4" width="9.7" height="1.2" fill="#646464"/><rect x="11" y="6.5" width="3" height="8" fill="#646464"/><path d="M5.8 14 L19.2 14 L12.5 19.3 Z" fill="#646464"/></svg>
<div class="r" style="left:592px;top:57px;width:64px;height:28px;background:#fff;border:1px solid #a9aeb9;"></div>
<div class="t" style="left:595px;top:62.03px;font-size:16.5px;line-height:16.5px;color:#1a1a1a;font-weight:normal;letter-spacing:0.477px;">0.60</div>
<div class="r" style="left:640px;top:59.5px;width:13.5px;height:10.5px;background:linear-gradient(#f2f2f2,#dedede);border:1px solid #c2c2c2;"></div>
<div class="r" style="left:640px;top:70px;width:13.5px;height:2px;background:#b8b8b8;"></div>
<div class="r" style="left:640px;top:72px;width:13.5px;height:10.5px;background:linear-gradient(#f2f2f2,#dedede);border:1px solid #c2c2c2;"></div>
<svg style="left:640px;top:59.5px;" width="14" height="11" viewBox="0 0 14 11"><path d="M3.8 7.2 L6.75 3.8 L9.7 7.2 Z" fill="#111"/></svg>
<svg style="left:640px;top:72px;" width="14" height="11" viewBox="0 0 14 11"><path d="M3.8 3.8 L6.75 7.2 L9.7 3.8 Z" fill="#111"/></svg>
<div class="btn" style="left:658.5px;top:58.5px;width:25px;height:25px;"></div>
<svg style="left:658.5px;top:58.5px;" width="25" height="25" viewBox="0 0 25 25"><rect x="3.4" y="5.6" width="17.8" height="10.8" rx="1.6" fill="none" stroke="#646464" stroke-width="1.9"/><rect x="5.6" y="8" width="2.4" height="1.8" fill="#646464"/><rect x="5.6" y="11.5" width="2.4" height="1.8" fill="#646464"/><rect x="11" y="16.5" width="3" height="2.6" fill="#646464"/><path d="M8.5 21.3 L16.5 21.3 L15 19 L10 19 Z" fill="#646464"/></svg>
<div class="btn" style="left:688.5px;top:58.5px;width:160px;height:25px;"></div>
<svg style="left:697px;top:63.5px;" width="15" height="15" viewBox="0 0 15 15"><path d="M0.5 0.3 L14.4 7.2 L0.5 14.3 Z" fill="#646464"/></svg>
<div class="t" style="left:718.2px;top:66.42px;font-size:12.5px;line-height:12.5px;color:#000;font-weight:normal;letter-spacing:0.030px;">Appearance Playback</div>
<div class="btn" style="left:853.2px;top:58.5px;width:178px;height:25px;"></div>
<svg style="left:859.6px;top:63.5px;" width="15" height="15" viewBox="0 0 15 15"><path d="M14.2 0.3 L0.3 7.2 L14.2 14.3 Z" fill="#646464"/></svg>
<div class="t" style="left:883px;top:66.42px;font-size:12.5px;line-height:12.5px;color:#000;font-weight:normal;letter-spacing:0.055px;">Disappearance Playback</div>
<div class="r" style="left:1037px;top:61px;width:1px;height:19px;background:#aeb2ba;"></div>
<div class="btn" style="left:1042.5px;top:58.5px;width:25px;height:25px;"></div>
<svg style="left:1042.5px;top:58.5px;" width="25" height="25" viewBox="0 0 25 25"><path d="M4.5 20 L4.5 12 A8 7.5 0 0 1 20.5 12 L20.5 20 L15.3 20 L15.3 13.5 A2.65 2.4 0 0 0 10 13.5 L10 20 Z" fill="#646464"/><rect x="6" y="15.9" width="2.4" height="2.5" fill="#fdfcf7"/><rect x="16.8" y="15.9" width="2.4" height="2.5" fill="#fdfcf7"/></svg>
<div class="btn" style="left:1072.5px;top:58.5px;width:25px;height:25px;"></div>
<svg style="left:1072.5px;top:58.5px;" width="25" height="25" viewBox="0 0 25 25"><rect x="5.7" y="5.5" width="13.5" height="13.9" fill="#646464"/><rect x="7.2" y="7.1" width="2.2" height="2" fill="#fdfcf7"/><rect x="7.2" y="11.3" width="2.2" height="2" fill="#fdfcf7"/><rect x="7.2" y="15.5" width="2.2" height="2" fill="#fdfcf7"/><rect x="11.4" y="7.1" width="2.2" height="2" fill="#fdfcf7"/><rect x="11.4" y="11.3" width="2.2" height="2" fill="#fdfcf7"/><rect x="11.4" y="15.5" width="2.2" height="2" fill="#fdfcf7"/><rect x="15.6" y="7.1" width="2.2" height="2" fill="#fdfcf7"/><rect x="15.6" y="11.3" width="2.2" height="2" fill="#fdfcf7"/><rect x="15.6" y="15.5" width="2.2" height="2" fill="#fdfcf7"/></svg>
<div class="btn" style="left:1103.3px;top:58.5px;width:25px;height:25px;"></div>
<svg style="left:1103px;top:58px;" width="26" height="26" viewBox="0 0 26 26"><path d="M17.5 2.6 L23.5 8.4 L14.2 17 L10.6 16.8 L8.4 14.5 L8.5 12 Z" fill="#fdfcf7" stroke="#646464" stroke-width="1.7" stroke-linejoin="round"/><path d="M11.6 7.4 L13.6 5.4 L20.4 11.8 L18.4 13.8 Z" fill="#646464"/><path d="M9.3 12.3 L10.5 11.2 L16 16.2 L14.6 17.2 Z" fill="#646464"/><rect x="2.2" y="17.4" width="7.4" height="6.2" rx="1.8" fill="#646464" transform="rotate(-12 6 20.5)"/><rect x="4" y="19.6" width="1.4" height="1.4" fill="#fdfcf7"/></svg>
<div class="btn" style="left:1133.3px;top:58.5px;width:25px;height:25px;"></div>
<svg style="left:1133px;top:58px;" width="26" height="26" viewBox="0 0 26 26"><path d="M6 6 L8 5.1 L16.5 5.1 L17.8 6.5 L17.8 15.7 L8.2 15.7 L8.2 10.2 L6 10.2 Z" fill="#646464"/><circle cx="12.9" cy="9.8" r="3" fill="#fdfcf7"/><rect x="12.2" y="9.1" width="1.5" height="1.5" fill="#646464"/><path d="M9.6 20.5 L12.9 16.8 L16.2 20.5" fill="none" stroke="#646464" stroke-width="1.9"/></svg>
<div class="btn" style="left:1163.2px;top:58.5px;width:25px;height:25px;"></div>
<svg style="left:1163.2px;top:58.5px;" width="25" height="25" viewBox="0 0 25 25"><rect x="3.8" y="4.5" width="17.9" height="15.3" fill="none" stroke="#646464" stroke-width="2"/><rect x="6.5" y="7" width="4.8" height="4.6" fill="none" stroke="#646464" stroke-width="1.6"/><rect x="13.5" y="7.2" width="5" height="1.6" fill="#646464"/><rect x="14.5" y="10.5" width="3.6" height="6.8" fill="#646464"/><rect x="6.3" y="14.2" width="1.8" height="1.8" fill="#646464"/><rect x="9.6" y="14.2" width="1.8" height="1.8" fill="#646464"/></svg>
<div class="r" style="left:1194px;top:61px;width:1px;height:19px;background:#aeb2ba;"></div>
<div class="t" style="left:1200.4px;top:64.92px;font-size:12.5px;line-height:12.5px;color:#a3a3a3;font-weight:normal;letter-spacing:0.507px;">Adjustment</div>
<div class="r" style="left:1307px;top:54px;width:11px;height:34px;background:linear-gradient(90deg,#ececec,#f2f2f2);border-radius:0 0 0 3px;"></div>
<div class="r" style="left:1307px;top:77px;width:11px;height:11px;background:linear-gradient(#e0e0e0,#a8a8a8);border-radius:0 0 0 3px;"></div>
<svg style="left:1307px;top:77px;" width="11" height="11" viewBox="0 0 11 11"><rect x="3" y="2" width="5" height="1" fill="#111"/><path d="M2.8 4 L8.2 4 L5.5 7 Z" fill="#111"/></svg>
<div class="r" style="left:522px;top:264px;width:770.2px;height:435.1px;border-style:solid;border-color:#fff;border-width:2.3px 1.4px 1.4px 2.3px;box-shadow:0 0 0 0.7px #3a3a3a, inset 0 0 0 0.7px #3a3a3a;"></div>
<div class="r" style="left:534px;top:277px;width:170px;height:69.5px;background:#191919;border:1.5px solid #e9e9e9;border-radius:4px;box-shadow:0 0 0 0.8px #111;"></div>
<div class="t" style="left:584.7px;top:291.35px;font-size:15.3px;line-height:15.3px;color:#ffffff;font-weight:normal;letter-spacing:0.430px;-webkit-text-stroke:0.55px #fff;">Stay: 100G</div>
<div class="t" style="left:583.5px;top:317.85px;font-size:15.3px;line-height:15.3px;color:#ffffff;font-weight:normal;letter-spacing:0.540px;-webkit-text-stroke:0.55px #fff;">Not Staying</div>
<svg style="left:540px;top:292.3px;" width="14" height="13" viewBox="0 0 14 13"><defs><filter id="bl" x="-30%" y="-30%" width="160%" height="160%"><feGaussianBlur stdDeviation="0.75"/></filter></defs><g filter="url(#bl)"><path d="M0.8 0.2 L13.5 5.8 L0.8 11.5 L2.8 5.8 Z" fill="#c6c634"/><path d="M0.8 0.2 L13.5 5.8 L2.8 5.8 Z" fill="#e8e848"/></g></svg>
<div class="r" style="left:822px;top:277px;width:170px;height:69.5px;background:#191919;border:1.5px solid #e9e9e9;border-radius:4px;box-shadow:0 0 0 0.8px #111;"></div>
<div class="t" style="left:872.7px;top:291.35px;font-size:15.3px;line-height:15.3px;color:#ffffff;font-weight:normal;letter-spacing:0.430px;-webkit-text-stroke:0.55px #fff;">Stay: 100G</div>
<div class="t" style="left:871.5px;top:317.85px;font-size:15.3px;line-height:15.3px;color:#ffffff;font-weight:normal;letter-spacing:0.540px;-webkit-text-stroke:0.55px #fff;">Not Staying</div>
<div class="r" style="left:534px;top:447.5px;width:170px;height:69.5px;background:#191919;border:1.5px solid #e9e9e9;border-radius:4px;box-shadow:0 0 0 0.8px #111;"></div>
<div class="t" style="left:584.7px;top:461.85px;font-size:15.3px;line-height:15.3px;color:#ffffff;font-weight:normal;letter-spacing:0.430px;-webkit-text-stroke:0.55px #fff;">Stay: 100G</div>
<div class="t" style="left:583.5px;top:488.35px;font-size:15.3px;line-height:15.3px;color:#ffffff;font-weight:normal;letter-spacing:0.540px;-webkit-text-stroke:0.55px #fff;">Not Staying</div>
<div class="r" style="left:822px;top:447.5px;width:170px;height:69.5px;background:#191919;border:1.5px solid #e9e9e9;border-radius:4px;box-shadow:0 0 0 0.8px #111;"></div>
<div class="t" style="left:872.7px;top:461.85px;font-size:15.3px;line-height:15.3px;color:#ffffff;font-weight:normal;letter-spacing:0.430px;-webkit-text-stroke:0.55px #fff;">Stay: 100G</div>
<div class="t" style="left:871.5px;top:488.35px;font-size:15.3px;line-height:15.3px;color:#ffffff;font-weight:normal;letter-spacing:0.540px;-webkit-text-stroke:0.55px #fff;">Not Staying</div>
<div class="r" style="left:1110px;top:447.5px;width:170px;height:69.5px;background:#191919;border:1.5px solid #e9e9e9;border-radius:4px;box-shadow:0 0 0 0.8px #111;"></div>
<div class="t" style="left:1160.7px;top:461.85px;font-size:15.3px;line-height:15.3px;color:#ffffff;font-weight:normal;letter-spacing:0.430px;-webkit-text-stroke:0.55px #fff;">Stay: 100G</div>
<div class="t" style="left:1159.5px;top:488.35px;font-size:15.3px;line-height:15.3px;color:#ffffff;font-weight:normal;letter-spacing:0.540px;-webkit-text-stroke:0.55px #fff;">Not Staying</div>
<div class="r" style="left:1110px;top:360px;width:170px;height:69.5px;background:#191919;border:1.5px solid #e9e9e9;border-radius:4px;box-shadow:0 0 0 0.8px #111;"></div>
<div class="t" style="left:1160.7px;top:374.35px;font-size:15.3px;line-height:15.3px;color:#ffffff;font-weight:normal;letter-spacing:0.430px;-webkit-text-stroke:0.55px #fff;">Stay: 100G</div>
<div class="t" style="left:1159.5px;top:400.85px;font-size:15.3px;line-height:15.3px;color:#ffffff;font-weight:normal;letter-spacing:0.540px;-webkit-text-stroke:0.55px #fff;">Not Staying</div>
<div class="r" style="left:534px;top:618px;width:170px;height:69.5px;background:#191919;border:1.5px solid #e9e9e9;border-radius:4px;box-shadow:0 0 0 0.8px #111;"></div>
<div class="t" style="left:584.7px;top:632.35px;font-size:15.3px;line-height:15.3px;color:#ffffff;font-weight:normal;letter-spacing:0.430px;-webkit-text-stroke:0.55px #fff;">Stay: 100G</div>
<div class="t" style="left:583.5px;top:658.85px;font-size:15.3px;line-height:15.3px;color:#ffffff;font-weight:normal;letter-spacing:0.540px;-webkit-text-stroke:0.55px #fff;">Not Staying</div>
<div class="r" style="left:822px;top:618px;width:170px;height:69.5px;background:#191919;border:1.5px solid #e9e9e9;border-radius:4px;box-shadow:0 0 0 0.8px #111;"></div>
<div class="t" style="left:872.7px;top:632.35px;font-size:15.3px;line-height:15.3px;color:#ffffff;font-weight:normal;letter-spacing:0.430px;-webkit-text-stroke:0.55px #fff;">Stay: 100G</div>
<div class="t" style="left:871.5px;top:658.85px;font-size:15.3px;line-height:15.3px;color:#ffffff;font-weight:normal;letter-spacing:0.540px;-webkit-text-stroke:0.55px #fff;">Not Staying</div>
<div class="r" style="left:1110px;top:618px;width:170px;height:69.5px;background:#191919;border:1.5px solid #e9e9e9;border-radius:4px;box-shadow:0 0 0 0.8px #111;"></div>
<div class="t" style="left:1160.7px;top:632.35px;font-size:15.3px;line-height:15.3px;color:#ffffff;font-weight:normal;letter-spacing:0.430px;-webkit-text-stroke:0.55px #fff;">Stay: 100G</div>
<div class="t" style="left:1159.5px;top:658.85px;font-size:15.3px;line-height:15.3px;color:#ffffff;font-weight:normal;letter-spacing:0.540px;-webkit-text-stroke:0.55px #fff;">Not Staying</div>
<div class="r" style="left:1153px;top:291px;width:109px;height:57px;background:#000;border:1.5px solid #e9e9e9;border-radius:4.5px;box-shadow:0 0 0 0.8px #222;"></div>
<div class="r" style="left:1154px;top:319px;width:107px;height:1.2px;background:#f0f0f0;"></div>
<div class="t" style="left:1184.5px;top:299.23px;font-size:14.5px;line-height:14.5px;color:#fff;font-weight:normal;letter-spacing:0.397px;-webkit-text-stroke:0.35px #fff;">Money</div>
<div class="t" style="left:1236.5px;top:328.47px;font-size:14.8px;line-height:14.8px;color:#fff;font-weight:bold;letter-spacing:0.350px;font-family:"Liberation Mono",monospace;">0</div>
<svg style="left:1237px;top:329px;" width="9" height="11" viewBox="0 0 9 11"><path d="M7.2 1.8 L1.8 9.2" stroke="#fff" stroke-width="1.3"/></svg>
<div class="r" style="left:1322px;top:53px;width:368px;height:823px;background:#ababab;"></div>
<div class="r" style="left:1323px;top:54px;width:366px;height:19px;background:#c08a00;"></div>
<div class="t" style="left:1328.7px;top:58.42px;font-size:12.5px;line-height:12.5px;color:#fbf3e2;font-weight:normal;letter-spacing:0.560px;">General Layout Settings</div>
<div class="r" style="left:1323px;top:73px;width:366px;height:60px;background:#f5efd7;"></div>
<div class="r" style="left:1323px;top:93px;width:366px;height:1px;background:#a3a3a3;"></div>
<div class="r" style="left:1323px;top:113px;width:366px;height:1px;background:#a3a3a3;"></div>
<div class="r" style="left:1323px;top:133px;width:366px;height:1px;background:#a3a3a3;"></div>
<div class="r" style="left:1542px;top:73px;width:1px;height:60px;background:#a3a3a3;"></div>
<div class="t" style="left:1326.5px;top:80.42px;font-size:12.5px;line-height:12.5px;color:#000;font-weight:normal;letter-spacing:-0.323px;">BGM</div>
<div class="t" style="left:1326.5px;top:100.42px;font-size:12.5px;line-height:12.5px;color:#000;font-weight:normal;letter-spacing:-0.469px;">BGS</div>
<div class="t" style="left:1326.5px;top:120.42px;font-size:12.5px;line-height:12.5px;color:#000;font-weight:normal;letter-spacing:0.681px;">Display Special Format for Party</div>
<div class="t" style="left:1546.5px;top:80.42px;font-size:12.5px;line-height:12.5px;color:#000;font-weight:normal;letter-spacing:0.679px;">Keep Playing the B...</div>
<div class="t" style="left:1546.5px;top:100.42px;font-size:12.5px;line-height:12.5px;color:#000;font-weight:normal;letter-spacing:0.561px;">Play the BGS as it i...</div>
<div class="t" style="left:1546.5px;top:120.42px;font-size:12.5px;line-height:12.5px;color:#000;font-weight:normal;letter-spacing:0.582px;">Using Game Definit...</div>
<svg style="left:1674px;top:78.5px;" width="12" height="12" viewBox="0 0 12 12"><path d="M0.5 6 L11 6 M6 1 L11 6 L6 11" fill="none" stroke="#959595" stroke-width="1.6"/></svg>
<svg style="left:1674px;top:98.5px;" width="12" height="12" viewBox="0 0 12 12"><path d="M0.5 6 L11 6 M6 1 L11 6 L6 11" fill="none" stroke="#959595" stroke-width="1.6"/></svg>
<svg style="left:1673.3px;top:117.4px;" width="13.5" height="13" viewBox="0 0 13.5 13"><rect x="0" y="0" width="13.5" height="13" rx="2" fill="#a6a6a6"/><path d="M2 2 L11.5 2 L6.75 8 Z" fill="#cfcfcf"/></svg>
<div class="r" style="left:4px;top:880px;width:1686px;height:36px;background:#696969;"></div>
<div class="t" style="left:6.3px;top:892.42px;font-size:12.5px;line-height:12.5px;color:#f2f2f2;font-weight:normal;letter-spacing:0.966px;">It is possible to customize the in-game menu structure, the design and display position of various windows, and to change the cursor design using sprites.</div>
<div class="r" style="left:1391px;top:886px;width:92px;height:24px;background:#b3b3b3;border-radius:4px;box-shadow:0 0 0 1px #a0a0a0;"></div>
<div class="r" style="left:1487px;top:886px;width:92px;height:24px;background:#b3b3b3;border-radius:4px;box-shadow:0 0 0 1px #a0a0a0;"></div>
<div class="r" style="left:1583px;top:886px;width:101px;height:24px;background:#b3b3b3;border-radius:4px;box-shadow:0 0 0 1px #a0a0a0;"></div>
<svg style="left:1395.5px;top:888.5px;" width="20" height="21" viewBox="0 0 20 21"><path d="M1.5 1.5 L11 1.5 L15.5 6 L15.5 10" fill="none" stroke="#6a6a6a" stroke-width="2"/><path d="M1.5 1.5 L1.5 18.5 L9 18.5" fill="none" stroke="#6a6a6a" stroke-width="2"/><rect x="4.5" y="5" width="2" height="2" fill="#6a6a6a"/><rect x="8" y="5" width="2" height="2" fill="#6a6a6a"/><rect x="4.5" y="9" width="2" height="2" fill="#6a6a6a"/><rect x="4.5" y="13" width="2" height="2" fill="#6a6a6a"/><path d="M9 12 L13 10.5 L19 16.5 L16 19.5 L10 13.5 Z" fill="#6a6a6a"/></svg>
<div class="t" style="left:1421px;top:893.02px;font-size:12.5px;line-height:12.5px;color:#000;font-weight:normal;letter-spacing:0.144px;">Apply</div>
<svg style="left:1492px;top:889px;" width="18" height="18" viewBox="0 0 18 18"><rect width="18" height="18" rx="2" fill="#5f8ee2"/><path d="M3.5 9.5 L7.5 13 L14.5 5.5" fill="none" stroke="#fff" stroke-width="2.4"/></svg>
<div class="t" style="left:1517.8px;top:893.02px;font-size:12.5px;line-height:12.5px;color:#000;font-weight:normal;letter-spacing:-0.781px;">OK</div>
<svg style="left:1588.5px;top:889px;" width="18" height="18" viewBox="0 0 18 18"><rect width="18" height="18" rx="2" fill="#e05c80"/><path d="M4.5 4.5 L13.5 13.5 M13.5 4.5 L4.5 13.5" fill="none" stroke="#fff" stroke-width="2.2"/></svg>
<div class="t" style="left:1614px;top:893.02px;font-size:12.5px;line-height:12.5px;color:#000;font-weight:normal;letter-spacing:-0.320px;">Cancel</div>
<svg style="left:1679px;top:905px;" width="14" height="14" viewBox="0 0 14 14"><path d="M0.5 13.5 L13.5 0.5 M4.5 13.5 L13.5 4.5 M8.5 13.5 L13.5 8.5" stroke="#a08309" stroke-width="1.5"/></svg>
</body></html>
